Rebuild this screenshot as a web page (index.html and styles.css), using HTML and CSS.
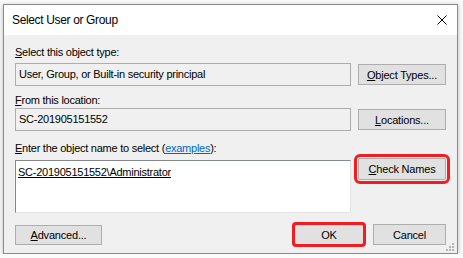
FILE: index.html
```html
<!DOCTYPE html>
<html lang="en">
<head>
    <meta charset="UTF-8">
    <meta name="viewport" content="width=device-width, initial-scale=1.0">
    <title>Select User or Group</title>
    <link rel="stylesheet" href="styles.css">
</head>
<body>

<div class="dialog">
    <div class="title-bar">
        <span class="title">Select User or Group</span>
        <svg class="close" width="10" height="10" viewBox="0 0 10 10">
            <path d="M0.5 0.5 L9.5 9.5 M9.5 0.5 L0.5 9.5" stroke="#000" stroke-width="1" fill="none"/>
        </svg>
    </div>

    <div class="dialog-body">
        <div class="picker">
            <label class="field-label"><u>S</u>elect this object type:</label>
            <div class="textbox readonly">User, Group, or Built-in security principal</div>
            <button class="btn side"><u>O</u>bject Types...</button>

            <label class="field-label second"><u>F</u>rom this location:</label>
            <div class="textbox readonly">SC-201905151552</div>
            <button class="btn side"><u>L</u>ocations...</button>

            <label class="field-label third"><u>E</u>nter the object name to select (<a href="#">examples</a>):</label>
            <div class="textbox names"><u>SC-201905151552\Administrator</u></div>
            <button class="btn side check marked"><u>C</u>heck Names</button>
        </div>

        <div class="actions">
            <button class="btn advanced"><u>A</u>dvanced...</button>
            <button class="btn ok default marked">OK</button>
            <button class="btn cancel">Cancel</button>
        </div>
    </div>

    <svg class="grip" width="9" height="9" viewBox="0 0 9 9">
        <rect x="6" y="0" width="2" height="2" fill="#b4b4b4"/>
        <rect x="3" y="3" width="2" height="2" fill="#b4b4b4"/>
        <rect x="6" y="3" width="2" height="2" fill="#b4b4b4"/>
        <rect x="0" y="6" width="2" height="2" fill="#b4b4b4"/>
        <rect x="3" y="6" width="2" height="2" fill="#b4b4b4"/>
        <rect x="6" y="6" width="2" height="2" fill="#b4b4b4"/>
    </svg>
</div>

</body>
</html>
```

FILE: styles.css
```css
body {
    margin: 0;
    background-color: #fbfbfb;
    font-family: "Liberation Sans", Arial, sans-serif;
    font-size: 11px;
    color: #000;
}
.dialog {
    position: relative;
    width: 455px;
    height: 250px;
    margin: 4px 0 0 3px;
    box-sizing: border-box;
    border: 1px solid #8a8a8a;
    box-shadow: 0 1px 5px rgba(0, 0, 0, 0.25);
    background-color: #f0f0f0;
}
.title-bar {
    height: 30px;
    background-color: #fff;
    display: flex;
    align-items: center;
    justify-content: space-between;
    padding: 0 10px 0 8px;
}
.title {
    font-size: 12px;
    letter-spacing: -0.35px;
}
.dialog-body {
    padding: 11px 11px 0 11px;
}
.picker {
    display: grid;
    grid-template-columns: 336px 88px;
    column-gap: 7px;
}
.field-label {
    grid-column: 1 / 3;
    height: 13px;
    line-height: 13px;
    margin-bottom: 4px;
    letter-spacing: -0.25px;
}
.field-label.second {
    margin-top: 8px;
    margin-bottom: 1px;
}
.field-label.third {
    margin-top: 11px;
    margin-bottom: 5px;
}
.field-label a {
    color: #0066cc;
}
.textbox {
    box-sizing: border-box;
    height: 23px;
    line-height: 21px;
    padding: 0 3px;
    border: 1px solid #adadad;
    letter-spacing: -0.25px;
}
.textbox.readonly {
    background-color: #f0f0f0;
}
.textbox.names {
    height: 53px;
    line-height: 13px;
    padding: 5px 2px;
    background-color: #fff;
    border-color: #828790 #e3e3e3 #e3e3e3 #828790;
}
.btn {
    box-sizing: border-box;
    height: 21px;
    padding: 0;
    background-color: #e1e1e1;
    border: 1px solid #adadad;
    font-family: "Liberation Sans", Arial, sans-serif;
    font-size: 11px;
    letter-spacing: -0.2px;
    color: #000;
}
.btn.side {
    align-self: center;
}
.btn.check {
    align-self: start;
    height: 22px;
    margin-top: -2px;
}
.marked {
    outline: 3px solid #f01e23;
    outline-offset: 1px;
    border-radius: 2px;
}
.actions {
    display: flex;
    align-items: center;
    margin-top: 11px;
}
.btn.advanced {
    width: 87px;
    height: 20px;
}
.btn.ok {
    width: 70px;
    margin-left: auto;
    margin-right: 9px;
}
.btn.default {
    border-color: #0078d7;
    outline-offset: -1px;
}
.btn.cancel {
    width: 73px;
}
.grip {
    position: absolute;
    right: 2px;
    bottom: 1px;
}
```
